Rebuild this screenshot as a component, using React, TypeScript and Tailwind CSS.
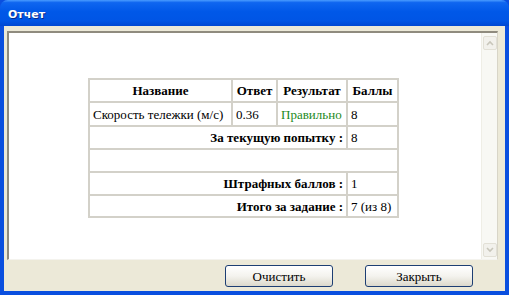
import React from "react";

const serif = { fontFamily: '"Liberation Serif", "DejaVu Serif", serif' };

function Scrollbar() {
  return (
    <div className="w-[16px] flex flex-col bg-[#f8f8f4] border-l border-[#efeee6]">
      <div className="mt-[3px] ml-[1px] w-[14px] h-[14px] rounded-[2px] border border-[#e2e0d6] bg-[#f2f1ec] flex items-center justify-center">
        <svg width="8" height="6" viewBox="0 0 8 6">
          <path d="M1 5 L4 2 L7 5" stroke="#c8c6ba" strokeWidth="1.6" fill="none" />
        </svg>
      </div>
      <div className="flex-1" />
      <div className="mb-[2px] ml-[1px] w-[14px] h-[14px] rounded-[2px] border border-[#e2e0d6] bg-[#f2f1ec] flex items-center justify-center">
        <svg width="8" height="6" viewBox="0 0 8 6">
          <path d="M1 1 L4 4 L7 1" stroke="#c8c6ba" strokeWidth="1.6" fill="none" />
        </svg>
      </div>
    </div>
  );
}

const cell = "border-2 border-[#d3d1c9] px-[3px] py-0 font-['Liberation_Serif',serif]";

function Report() {
  return (
    <table
      className="border-collapse table-fixed text-[13px] text-black leading-none self-start font-['Liberation_Serif',serif]"
      style={serif}
    >
      <colgroup>
        <col className="w-[143px]" />
        <col className="w-[45px]" />
        <col className="w-[70px]" />
        <col className="w-[51px]" />
      </colgroup>
      <tbody>
        <tr className="h-[23px]">
          <th className={`${cell} text-center font-bold`}>Название</th>
          <th className={`${cell} text-center font-bold`}>Ответ</th>
          <th className={`${cell} text-center font-bold`}>Результат</th>
          <th className={`${cell} text-center font-bold`}>Баллы</th>
        </tr>
        <tr className="h-[24px]">
          <td className={`${cell} text-left whitespace-nowrap`}>Скорость тележки (м/с)</td>
          <td className={`${cell} text-left`}>0.36</td>
          <td className={`${cell} text-left text-[#1c8a1c]`}>Правильно</td>
          <td className={`${cell} text-left`}>8</td>
        </tr>
        <tr className="h-[23px]">
          <td colSpan={3} className={`${cell} text-right font-bold`}>За текущую попытку :</td>
          <td className={`${cell} text-left`}>8</td>
        </tr>
        <tr className="h-[23px]">
          <td colSpan={4} className={cell}></td>
        </tr>
        <tr className="h-[23px]">
          <td colSpan={3} className={`${cell} text-right font-bold`}>Штрафных баллов :</td>
          <td className={`${cell} text-left`}>1</td>
        </tr>
        <tr className="h-[22px]">
          <td colSpan={3} className={`${cell} text-right font-bold`}>Итого за задание :</td>
          <td className={`${cell} text-left whitespace-nowrap`}>7 (из 8)</td>
        </tr>
      </tbody>
    </table>
  );
}

function XPButton({ label }: { label: string }) {
  return (
    <button
      className="w-[108px] h-[22px] rounded-[3px] border border-[#1d3e73] bg-gradient-to-b from-[#ffffff] via-[#f4f3ee] to-[#dcd9cc] text-[13px] text-black leading-none flex items-center justify-center pt-[1px] font-['Liberation_Serif',serif]"
      style={serif}
    >
      {label}
    </button>
  );
}

export default function App() {
  return (
    <div className="w-[509px] h-[295px] flex flex-col bg-[#0a4fdf] overflow-hidden">
      <div
        className="h-[26px] shrink-0 rounded-t-[8px] flex items-center pl-[8px] pt-[2px]"
        style={{
          background:
            "linear-gradient(to bottom, #4a9cff 0%, #0f66f0 10%, #0058e8 45%, #0055e5 80%, #0048d2 100%)",
        }}
      >
        <span
          className="text-white font-bold text-[11px] leading-none"
          style={{ fontFamily: '"DejaVu Sans", "Liberation Sans", sans-serif', textShadow: "1px 1px 0 #0a2a8a" }}
        >
          Отчет
        </span>
      </div>
      <div className="flex-1 flex flex-col mx-[4px] mb-[4px] bg-[#ece9d8]">
        <div className="mt-[5px] ml-[3px] mr-[7px] h-[229px] flex bg-white border-t-2 border-l-2 border-b border-r border-t-[#8f8b7e] border-l-[#8f8b7e] border-b-[#f4f3ee] border-r-[#d8d5c8]">
          <div className="flex-1 flex items-start justify-center pt-[45px] pr-[3px]">
            <Report />
          </div>
          <Scrollbar />
        </div>
        <div className="mt-[5px] flex justify-end gap-[32px] pr-[32px]">
          <XPButton label="Очистить" />
          <XPButton label="Закрыть" />
        </div>
      </div>
    </div>
  );
}
